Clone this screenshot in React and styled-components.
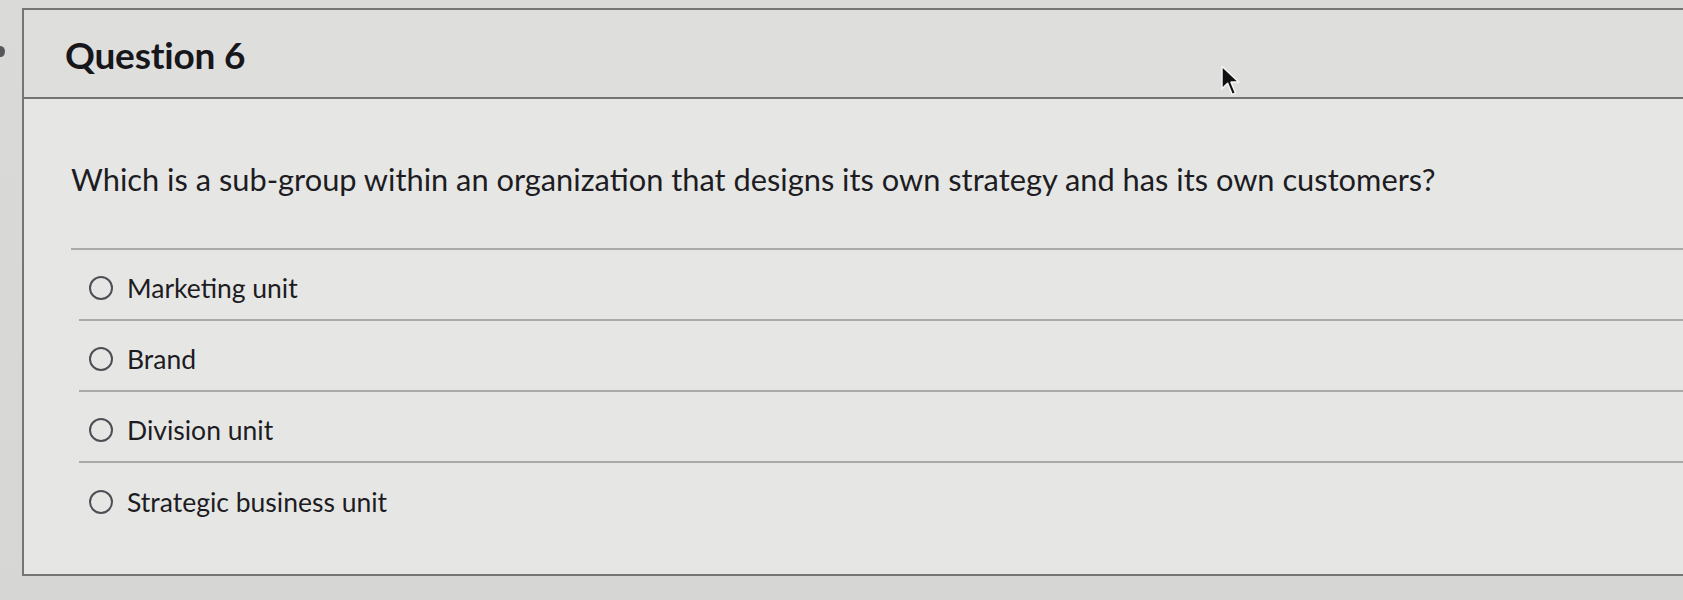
import React from "react";
import styled, { createGlobalStyle } from "styled-components";

const Global = createGlobalStyle`
  html, body { margin: 0; padding: 0; }
  body {
    background: #d8d9d7;
    font-family: Lato, "Noto Sans", sans-serif;
    color: #1d1c22;
    overflow: hidden;
  }
`;

const Page = styled.div`
  position: relative;
  width: 1683px;
  height: 600px;
  padding: 8px 0 0 22px;
  box-sizing: border-box;
  background: linear-gradient(180deg, #dadbd9 0%, #d6d7d5 100%);
`;

const EdgeMark = styled.div`
  position: absolute;
  left: -4px;
  top: 46px;
  width: 9px;
  height: 11px;
  border-radius: 50%;
  background: #55575a;
`;

const Panel = styled.section`
  border: 2px solid #747675;
  border-right: none;
  width: 1700px;
  height: 568px;
  box-sizing: border-box;
  display: flex;
  flex-direction: column;
  background: #e6e7e5;
`;

const Header = styled.header`
  height: 87px;
  flex: none;
  background: #dedfdd;
  border-bottom: 2px solid #737574;
  display: flex;
  align-items: center;
  padding-left: 41px;
`;

const Title = styled.h2`
  margin: 0;
  font-family: Lato, sans-serif;
  font-weight: 700;
  font-size: 37px;
  letter-spacing: -0.2px;
  color: #17161b;
  padding-top: 1px;
`;

const Body = styled.div`
  padding: 61px 0 0 47px;
  display: flex;
  flex-direction: column;
`;

const QuestionText = styled.p`
  margin: 0;
  font-size: 30.8px;
  line-height: 40px;
  font-weight: 400;
  color: #1d1c22;
  padding-bottom: 48px;
  border-bottom: 2px solid #a9abab;
`;

const Options = styled.ul`
  list-style: none;
  margin: 0;
  padding: 0 0 0 8px;
`;

const Option = styled.li`
  height: 71px;
  display: flex;
  align-items: center;
  gap: 14px;
  padding: 6px 0 0 10px;
  box-sizing: border-box;
  border-bottom: ${(p) => (p.$last ? "none" : "2px solid #a9abab")};
  font-size: 26.5px;
  color: #1d1c22;
`;

const Radio = styled.span`
  width: 20px;
  height: 20px;
  border: 2px solid #4f4e55;
  border-radius: 50%;
  flex: none;
`;

const Cursor = styled.svg`
  position: absolute;
  left: 1219px;
  top: 64px;
`;

const options = ["Marketing unit", "Brand", "Division unit", "Strategic business unit"];

export default function App() {
  return (
    <>
      <Global />
      <Page>
        <EdgeMark />
        <Panel>
          <Header>
            <Title>Question 6</Title>
          </Header>
          <Body>
            <QuestionText>
              Which is a sub-group within an organization that designs its own strategy and has its own customers?
            </QuestionText>
            <Options>
              {options.map((o, i) => (
                <Option key={o} $last={i === options.length - 1}>
                  <Radio />
                  <span>{o}</span>
                </Option>
              ))}
            </Options>
          </Body>
        </Panel>
        <Cursor width="24" height="34" viewBox="0 0 20 30">
          <path
            d="M2 2 L2 22 L7 17 L11 27 L14 25.5 L10 16 L17 16 Z"
            fill="#111"
            stroke="#f4f4f4"
            strokeWidth="1.4"
            strokeLinejoin="round"
          />
        </Cursor>
      </Page>
    </>
  );
}
